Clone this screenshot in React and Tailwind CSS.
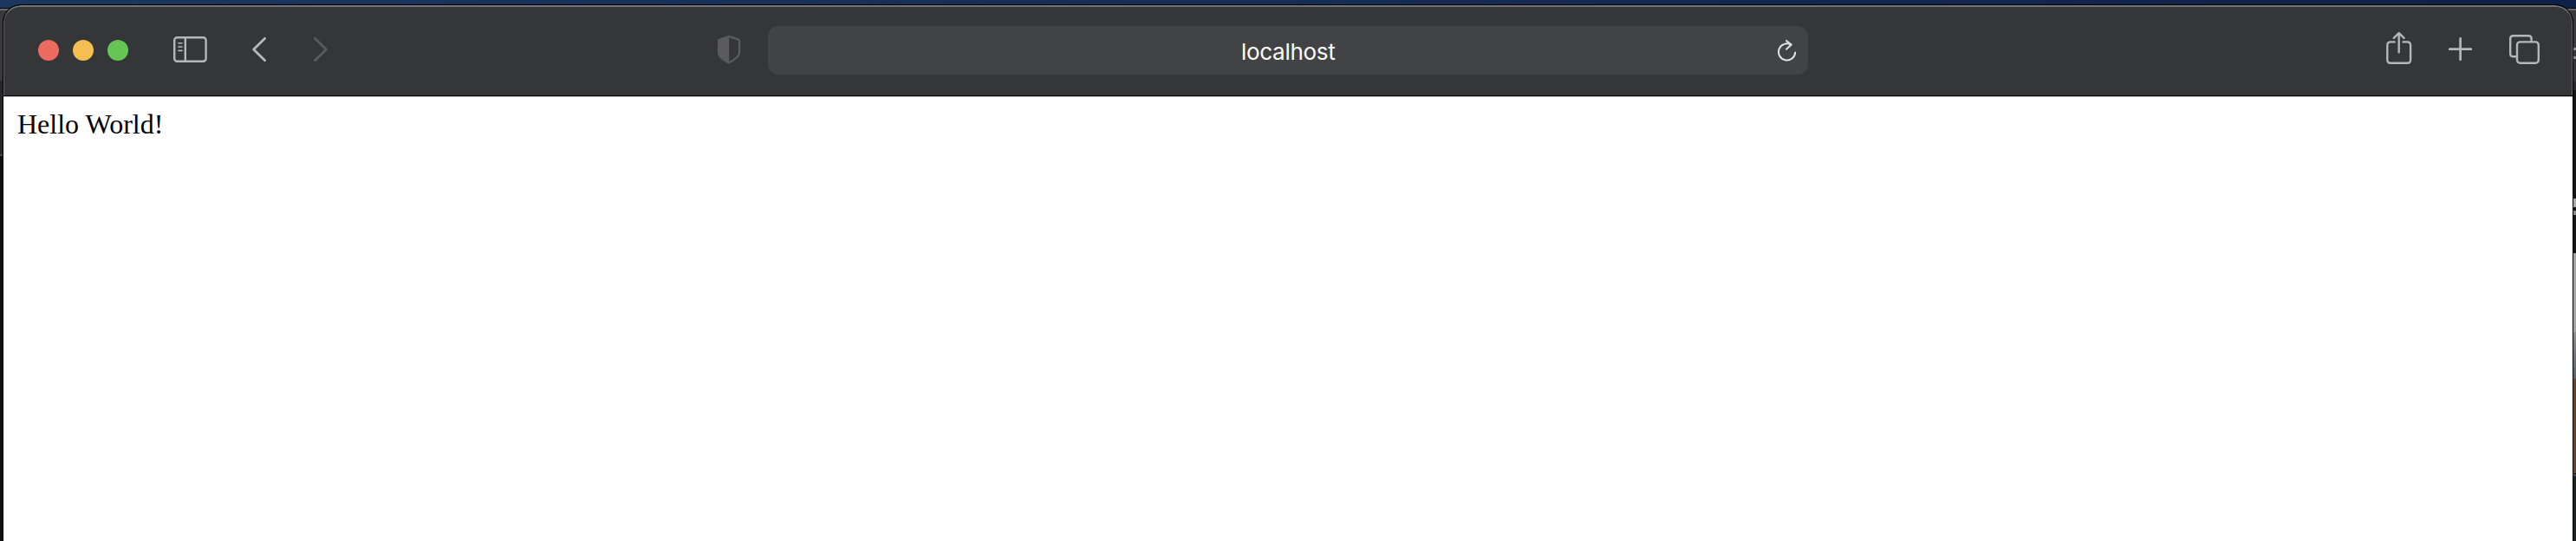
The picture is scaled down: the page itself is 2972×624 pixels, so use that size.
const icon = {
  fill: 'none',
  stroke: '#b7b7b9',
  strokeWidth: 2.4,
  strokeLinecap: 'round',
  strokeLinejoin: 'round',
};

function SidebarIcon() {
  return (
    <svg className="ml-[52px] mt-[42px] h-[30px] w-[39px]" viewBox="0 0 39 30" {...icon}>
      <rect x="1.2" y="1.2" width="36.4" height="27.6" rx="3.2" />
      <path d="M13.8 1.2V28.8" />
      <path d="M6 7.7H10M6 12H10M6 16.4H10" strokeWidth="1.6" />
    </svg>
  );
}

function BackIcon() {
  return (
    <svg className="ml-[51px] mt-[42px] h-[30px] w-[18px]" viewBox="0 0 18 30" {...icon}>
      <path d="M15.6 2.2L2.6 14.9L15.6 27.8" strokeWidth="2.8" />
    </svg>
  );
}

function ForwardIcon() {
  return (
    <svg className="ml-[53px] mt-[42px] h-[30px] w-[18px]" viewBox="0 0 18 30" {...icon} stroke="#5b5b5d">
      <path d="M2.4 2.2L15.4 14.9L2.4 27.8" strokeWidth="2.8" />
    </svg>
  );
}

function ShieldIcon() {
  return (
    <svg className="ml-[448px] mt-[40px] h-[34px] w-[28px]" viewBox="0 0 28 34" fill="none">
      <path d="M14 1.9L25 5.6Q26 6 26 7.2V20Q26 24 22.5 26.8Q18.5 30 14 32.3" stroke="#5b5b5d" strokeWidth="2.3" strokeLinejoin="round" />
      <path d="M14.1 0.8L2 5Q0.9 5.4 0.9 6.8V20.2Q0.9 24.6 4.6 27.7Q8.6 31 14.1 33.8Z" fill="#5b5b5d" />
    </svg>
  );
}

function ReloadIcon() {
  return (
    <svg className="mr-[13px] mt-[15px] h-[28px] w-[22px]" viewBox="0 0 22 28" fill="none" stroke="#e2e2e3" strokeWidth="2" strokeLinecap="round" strokeLinejoin="round">
      <path d="M20.2 15.4A9.6 9.6 0 1 1 15.4 6.6" />
      <path d="M10 2L15.7 6.6L10 11.7" />
    </svg>
  );
}

function ShareIcon() {
  return (
    <svg className="mt-[36px] h-[39px] w-[30px]" viewBox="0 0 30 39" {...icon}>
      <path d="M9.6 12.4H5.2Q1.3 12.4 1.3 16.2V33Q1.3 36.8 5.2 36.8H24.2Q28.1 36.8 28.1 33V16.2Q28.1 12.4 24.2 12.4H19.6" />
      <path d="M14.7 24.2V2.4M8.8 7.9L14.7 2.2L20.6 7.9" />
    </svg>
  );
}

function PlusIcon() {
  return (
    <svg className="ml-[42px] mt-[43px] h-[28px] w-[28px]" viewBox="0 0 28 28" {...icon} strokeWidth="2.7">
      <path d="M13.6 1.3V25.8M1.3 13.7H25.8" />
    </svg>
  );
}

function TabsIcon() {
  return (
    <svg className="ml-[41px] mr-[37px] mt-[39px] h-[36px] w-[36px]" viewBox="0 0 36 36" {...icon}>
      <path d="M8.8 26.2H5.2Q2.2 26.2 2.2 22.8V5.6Q2.2 2.2 5.6 2.2H23.2Q26.6 2.2 26.6 5.6V8.6" />
      <rect x="10" y="9.4" width="24.8" height="24.4" rx="3.6" />
    </svg>
  );
}

function Desktop() {
  return (
    <div aria-hidden="true" className="col-start-1 row-start-1 flex h-[624px] flex-col bg-linear-to-r from-[#1b365f] via-[#162d55] to-[#0e2146]">
      <div className="mt-[9px] h-px shrink-0 bg-[#08090c]" />
      <div className="h-[2px] shrink-0 bg-[#68696c]" />
      <div className="flex flex-1 justify-between">
        <div className="flex w-8 flex-col bg-[#100f0b]">
          <div className="h-[81px] bg-[#3a3a3c]" />
          <div className="h-[85px] bg-[#272628]" />
          <div className="h-[2px] bg-[#4b4b4b]" />
        </div>
        <div className="flex w-8 flex-col items-stretch bg-[#1a2325]">
          <div className="h-[43px] bg-[#3a3a3c]" />
          <div className="h-[3px] bg-[#8e8e90]" />
          <div className="h-[7px] bg-[#3a3a3c]" />
          <div className="h-[3px] bg-[#8e8e90]" />
          <div className="h-[26px] bg-[#363638]" />
          <div className="h-[10px] bg-[#29292b]" />
          <div className="h-[125px] bg-[#151515]" />
          <div className="h-[10px] bg-[#a9a9a9]" />
          <div className="h-[4px] bg-[#151515]" />
          <div className="h-[5px] bg-[#8b8b8b]" />
          <div className="h-[44px] bg-[#151515]" />
          <div className="h-[91px] bg-[#a5a5a5]" />
          <div className="h-[54px] bg-linear-to-b from-[#8b8f94] to-[#5d6168]" />
          <div className="h-[29px] bg-[#70451f]" />
          <div className="h-[80px] bg-linear-to-b from-[#70451f] to-[#67472b]" />
          <div className="h-px bg-[#0c0c0c]" />
          <div className="h-[2px] bg-[#4e5255]" />
        </div>
      </div>
    </div>
  );
}

export default function App() {
  return (
    <div className="grid h-[624px] w-[2972px] grid-cols-1 overflow-hidden">
      <Desktop />
      <div className="col-start-1 row-start-1 ml-[3px] mr-[3px] mt-[5px] flex h-[619px] flex-col overflow-hidden rounded-t-[21px] border-x border-t border-black bg-black">
        <header className="flex h-[104px] shrink-0 items-start rounded-t-[20px] border-x border-t-2 border-x-[#626264] border-t-[#747477] bg-[#353638]">
          <div className="-mt-[8px] flex w-full items-start">
            <div className="ml-[39px] mt-[46px] flex gap-4">
              <span className="size-6 rounded-full bg-[#ec6a5e]" />
              <span className="size-6 rounded-full bg-[#f4bf50]" />
              <span className="size-6 rounded-full bg-[#65c555]" />
            </div>
            <SidebarIcon />
            <BackIcon />
            <ForwardIcon />
            <ShieldIcon />
            <div className="ml-[31px] mt-[30px] flex h-[56px] w-[1200px] items-start rounded-[12px] bg-[#424345]">
              <span className="ml-[546px] mt-[12px] flex-1 font-[Inter,sans-serif] text-[26px] leading-[36px] tracking-[-0.3px] text-white">localhost</span>
              <ReloadIcon />
            </div>
            <div className="ml-auto flex items-start">
              <ShareIcon />
              <PlusIcon />
              <TabsIcon />
            </div>
          </div>
        </header>
        <main className="mt-px flex-1 border-t border-[#b8b8b8] bg-white px-4 pt-[13px] font-['Liberation_Serif',serif] text-[32px] leading-[36px] text-black">
          Hello World!
        </main>
      </div>
    </div>
  );
}
